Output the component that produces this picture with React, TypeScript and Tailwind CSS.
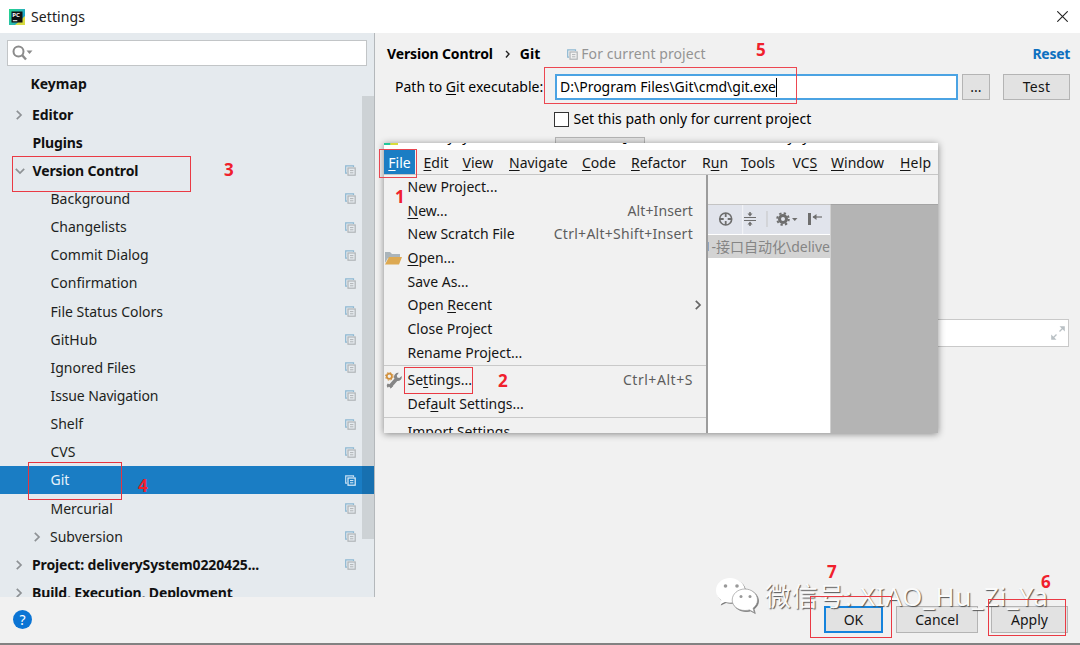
import React from "react";

type Row = { t: string; x: number; bold?: boolean; arrow?: "r" | "d"; copy?: boolean; sel?: boolean; k?: string };

const rows: Row[] = [
  { t: "Editor", x: 32, bold: true, arrow: "r" },
  { t: "Plugins", x: 32.5, bold: true },
  { t: "Version Control", x: 32.5, bold: true, arrow: "d", copy: true },
  { t: "Background", x: 50.5, copy: true },
  { t: "Changelists", x: 50.5, copy: true },
  { t: "Commit Dialog", x: 50.5, copy: true },
  { t: "Confirmation", x: 50.5, copy: true },
  { t: "File Status Colors", x: 50.5, copy: true },
  { t: "GitHub", x: 50.5, copy: true },
  { t: "Ignored Files", x: 50.5, copy: true },
  { t: "Issue Navigation", x: 50.5, copy: true, k: "tracking-[-0.12px]" },
  { t: "Shelf", x: 50.5, copy: true },
  { t: "CVS", x: 50.5, copy: true },
  { t: "Git", x: 50.5, copy: true, sel: true },
  { t: "Mercurial", x: 50.5, copy: true },
  { t: "Subversion", x: 50, arrow: "r", copy: true },
  { t: "Project: deliverySystem0220425...", x: 32, bold: true, arrow: "r", copy: true },
  { t: "Build, Execution, Deployment", x: 32, bold: true, arrow: "r" },
];

function CopyIcon({ sel }: { sel?: boolean }) {
  return (
    <svg width="11" height="11" viewBox="0 0 11 11" fill="none" className="shrink-0">
      <path d="M8.500 2V.8H.7v7.400H2" stroke={sel ? "#c5def2" : "#8db8d2"} strokeWidth="1.200" />
      <rect x="3" y="3" width="7.200" height="7.200" stroke={sel ? "#e2eff9" : "#b0b4b7"} strokeWidth="1.200" />
      <path d="M5 5.600h3.400M5 7.800h3.400" stroke={sel ? "#e2eff9" : "#b0b4b7"} />
    </svg>
  );
}

function Arrow({ dir, color = "#8e9295" }: { dir: "r" | "d"; color?: string }) {
  return (
    <svg width="10" height="10" viewBox="0 0 10 10" fill="none" className="shrink-0">
      <path d={dir === "r" ? "M2.8.8 7 5 2.8 9.2" : "M.8 2.8 5 7 9.2 2.8"} stroke={color} strokeWidth="1.700" />
    </svg>
  );
}

function TreeRow({ r }: { r: Row }) {
  return (
    <div className={"flex h-[28.15px] shrink-0 items-center " + (r.sel ? "bg-[#1a7dc4] text-[#e8f3fb]" : "text-[#1d1f21]")}>
      <div className="flex shrink-0 justify-end pr-[8px]" style={{ width: r.x }}>
        {r.arrow && <Arrow dir={r.arrow} />}
      </div>
      <div className={"flex-1 whitespace-nowrap " + (r.bold ? "font-bold tracking-[-0.14px] text-[#111] " : "") + (r.k ?? "")}>{r.t}</div>
      {r.copy && <CopyIcon sel={r.sel} />}
      <div className="w-[18px] shrink-0" />
    </div>
  );
}

function U({ s }: { s: string }) {
  const [a, b, c] = s.split("_");
  if (b === undefined) return <>{a}</>;
  return (
    <>
      {a}
      <span className="underline decoration-1 underline-offset-2">{b}</span>
      {c}
    </>
  );
}

function MenuItem({ s, k, icon, arrow }: { s: string; k?: string; icon?: React.ReactNode; arrow?: boolean }) {
  return (
    <div className="flex h-[23.65px] shrink-0 items-center whitespace-nowrap">
      <div className="w-[23.5px] shrink-0 pl-px">{icon}</div>
      <div className="flex-1 text-[#151515]"><U s={s} /></div>
      {k && <div className={"pr-[13px] text-[#5d5d5d] " + (k === "Ctrl+Alt+S" ? "tracking-[0.55px]" : k.startsWith("Ctrl") ? "tracking-[0.27px]" : "tracking-[0.1px]")}>{k}</div>}
      {arrow && <div className="pr-[3px]"><Arrow dir="r" color="#666" /></div>}
    </div>
  );
}

function Btn({ c, children }: { c: string; children: React.ReactNode }) {
  return <div className={"flex shrink-0 items-center justify-center text-[#151515] " + c}>{children}</div>;
}

function Mark({ c, n }: { c: string; n: string }) {
  return <div className={"absolute text-[17px] leading-5 font-bold text-[#f0202c] " + c}>{n}</div>;
}

function Logo() {
  return (
    <svg width="16" height="16" viewBox="0 0 16 16">
      <defs>
        <linearGradient id="lg" x1="0" y1="0" x2="1" y2="0.6">
          <stop offset="0" stopColor="#21d789" />
          <stop offset=".6" stopColor="#2bb8b0" />
          <stop offset="1" stopColor="#1597d8" />
        </linearGradient>
      </defs>
      <rect width="16" height="16" fill="url(#lg)" />
      <path d="M16 7v9H6z" fill="#d8dc42" />
      <rect x="2.500" y="2.500" width="11" height="11" fill="#111" />
      <text x="3.200" y="8" fontSize="6" fontWeight="700" fill="#fff" fontFamily="Noto Sans">PC</text>
      <path d="M3.800 11.700h4.500" stroke="#fff" />
    </svg>
  );
}

const menus = [
  { s: "_F_ile", c: "w-[31px] justify-center bg-[#1a7dc4] text-white" },
  { s: "_E_dit", c: "pl-[8.500px] w-[47.500px]" },
  { s: "_V_iew", c: "w-[46.500px]" },
  { s: "_N_avigate", c: "w-[73px]" },
  { s: "_C_ode", c: "w-[49px]" },
  { s: "_R_efactor", c: "w-[71px]" },
  { s: "R_u_n", c: "w-[39px]" },
  { s: "_T_ools", c: "w-[51.500px]" },
  { s: "VC_S_", c: "w-[38.500px]" },
  { s: "_W_indow", c: "w-[69px]" },
  { s: "_H_elp", c: "tracking-[0.2px]" },
];

function Popup() {
  return (
    <div className="absolute top-[143px] left-[384px] flex h-[290px] w-[554px] flex-col overflow-hidden bg-[#f1f1f1] shadow-[0_1px_7px_rgba(0,0,0,0.45)]">
      <div className="relative h-[7px] shrink-0 overflow-hidden bg-white">
        <div className="h-[2px] w-[14px] bg-linear-to-r from-[#21c79a] from-40% to-[#d9dc3c] to-50%" />
        <div className="absolute top-[-17px] left-[19px] leading-[20px] whitespace-pre">deliverySystem</div>
        <div className="absolute top-[-17px] left-[238px] leading-[20px] whitespace-pre">[D:\</div>
        <div className="absolute top-[-17px] left-[359px] leading-[20px] whitespace-pre">deliverySystem</div>
      </div>
      <div className="flex h-[25px] shrink-0 items-stretch border-b border-[#c6c6c6] text-[#151515]">
        {menus.map((m) => (
          <div key={m.s} className={"flex shrink-0 items-center pt-px whitespace-pre " + m.c}><span><U s={m.s} /></span></div>
        ))}
      </div>
      <div className="flex min-h-0 flex-1">
        <div className="flex w-[324px] shrink-0 flex-col overflow-hidden border-r-2 border-[#9c9c9c] bg-[#f1f1f1] pt-[0.4px]">
          <MenuItem s="New Project..." />
          <MenuItem s="_N_ew..." k="Alt+Insert" />
          <MenuItem s="New Scratch File" k="Ctrl+Alt+Shift+Insert" />
          <MenuItem
            s="_O_pen..."
            icon={
              <svg width="17" height="13" viewBox="0 0 17 13">
                <path d="M0 0h5l2 2h8v4H3L0 11z" fill="#aab4ba" />
                <path d="M4 5h13l-3 7.500H0z" fill="#dda952" />
              </svg>
            }
          />
          <MenuItem s="Save As..." />
          <MenuItem s="Open _R_ecent" arrow />
          <MenuItem s="Close Project" />
          <MenuItem s="Rename Project..." />
          <div className="mt-[0.6px] mb-[2.5px] h-px shrink-0 bg-[#c9c9c9]" />
          <MenuItem
            s="Se_t_tings..."
            k="Ctrl+Alt+S"
            icon={
              <svg width="17" height="17" viewBox="0 0 17 17" fill="none">
                <path d="M4.500 15 12 6.500" stroke="#858585" strokeWidth="3.600" />
                <path d="M13.800.8a4.200 4.200 0 0 0-4.600 5.400l3 2.800a4.200 4.200 0 0 0 4.500-5l-2.400 2-2-.6-.5-2z" fill="#858585" />
                <path d="M2.800 11.500a3 3 0 0 0 0 4.200l1.500-1.500 1.200.8-.2 1.700 3-2.700z" fill="#858585" />
                <circle cx="4.300" cy="4.300" r="2.600" stroke="#d0903d" strokeWidth="1.800" />
                <circle cx="4.300" cy="4.300" r="3.900" stroke="#d0903d" strokeWidth=".9" strokeDasharray="1.600 1.460" />
              </svg>
            }
          />
          <MenuItem s="Def_a_ult Settings..." />
          <div className="mt-[1px] mb-[2.5px] h-px shrink-0 bg-[#c9c9c9]" />
          <MenuItem s="Import Settings..." />
        </div>
        <div className="flex flex-1 flex-col">
          <div className="h-[29px] shrink-0" />
          <div className="flex flex-1">
            <div className="flex w-[122px] shrink-0 flex-col bg-white">
              <div className="h-[31px] shrink-0 border-t border-b border-t-[#c4c4c4] border-b-white bg-[#e1e4ec]">
                <svg width="122" height="29" viewBox="0 0 122 29" fill="none" stroke="#6e6e6e">
                  <circle cx="17.700" cy="14" r="6" strokeWidth="1.600" />
                  <path d="M17.700 8v4M17.700 16v4M11.700 14h4M19.700 14h4" strokeWidth="1.800" />
                  <path d="M34.700 0v29" stroke="#f4f5f8" />
                  <path d="M36 12.500h12M36 15.500h12" strokeWidth="1.200" />
                  <path d="M42 7v3M42 18v3" strokeWidth="1.500" />
                  <path d="m39.500 8.500 2.500 3 2.500-3zM39.500 19.500l2.500-3 2.500 3z" fill="#6e6e6e" stroke="none" />
                  <path d="M59 6v16" stroke="#c5c5c5" />
                  <circle cx="75" cy="14" r="3.500" strokeWidth="3" />
                  <circle cx="75" cy="14" r="5.800" strokeWidth="2" strokeDasharray="2.300 2.255" />
                  <path d="M84 13h5.500l-2.750 3z" fill="#6e6e6e" stroke="none" />
                  <path d="M101.500 8v12" strokeWidth="3" />
                  <path d="M105 12h9" strokeWidth="1.200" />
                  <path d="m108.500 9-4 3 4 3z" fill="#6e6e6e" stroke="none" />
                </svg>
              </div>
              <div className="flex h-[23px] shrink-0 items-center overflow-hidden bg-[#d3d3d3] whitespace-nowrap text-[#858585]">
                <span className="mr-[3px] h-[9px] w-px bg-[#8fa5c2]" />
                <span className="text-[14px]">-接口自动化\delive</span>
              </div>
            </div>
            <div className="flex-1 border-t border-l border-t-[#a4a4a4] border-l-[#d0d0d0] bg-[#b4b4b4]" />
          </div>
        </div>
      </div>
    </div>
  );
}

function Watermark() {
  return (
    <div className="absolute top-[575px] left-[714px] flex items-center">
      <svg width="46" height="42" viewBox="0 0 46 42" className="drop-shadow-[1px_1px_0.5px_rgba(80,80,80,0.75)]">
        <path d="M16 3C8 3 2 8.500 2 15.500c0 4 2 7.400 5.300 9.700L5.800 29.500l5.200-2.500c1.600.5 3.300.8 5 .8 8 0 15-5.500 15-12.300S24 3 16 3z" fill="#fff" />
        <path d="M30.800 14c7 0 12.700 4.800 12.700 11 0 3.400-1.800 6.200-4.500 8.200l1.300 4.300-4.800-2.600c-1.400.4-2.900.6-4.500.6-7 0-12.800-4.500-12.800-10.500S23.800 14 30.800 14z" fill="#fff" stroke="#999" strokeWidth=".7" />
        <g fill="#999">
          <circle cx="11.500" cy="11" r="1.800" /><circle cx="23" cy="11" r="1.800" />
          <circle cx="27" cy="21.500" r="1.500" /><circle cx="36" cy="21.500" r="1.500" />
        </g>
      </svg>
      <div className="ml-[5px] text-[26px] leading-[40px] tracking-[0.65px] whitespace-nowrap text-[#fafafa] [text-shadow:1px_1px_1px_#555]">微信号: XIAO_Hu_Zi_Ya</div>
    </div>
  );
}

export default function App() {
  return (
    <div className="relative flex h-[645px] w-[1080px] flex-col overflow-hidden bg-[#f1f1f1] font-['Noto_Sans','Noto_Sans_CJK_SC',sans-serif] text-[14px] leading-[20px]">
      <div className="flex h-[33px] shrink-0 items-center bg-white pr-[12px] pl-[9px]">
        <Logo />
        <div className="ml-[6px] flex-1 tracking-[0.1px] text-[#222]">Settings</div>
        <svg width="11" height="11" viewBox="0 0 11 11"><path d="m.3.3 10.400 10.400m0-10.400L.3 10.700" stroke="#222" strokeWidth="1.100" /></svg>
      </div>
      <div className="flex h-[563.5px] shrink-0">
        <div className="relative flex w-[375px] shrink-0 flex-col overflow-hidden border-r border-[#b4b8bb] bg-[#e5eaee]">
          <div className="mx-[7px] mt-[7px] flex h-[26px] shrink-0 items-center border border-[#c2c5c7] bg-white pl-[4px]">
            <svg width="22" height="16" viewBox="0 0 22 16" fill="none">
              <circle cx="6.500" cy="6.500" r="5" stroke="#8b8b8b" strokeWidth="2" />
              <path d="m10 10 4 4.500" stroke="#8b8b8b" strokeWidth="2.400" />
              <path d="M14.500 5.500h6l-3 3.500z" fill="#8b8b8b" />
            </svg>
          </div>
          <div className="mt-[4px] mb-[-2.5px] flex h-[33px] shrink-0 items-start pt-[4px] pl-[30.5px] font-bold text-[#111]">Keymap</div>
          {rows.map((r) => <TreeRow key={r.t} r={r} />)}
          <div className="absolute top-[63px] right-0 h-[443px] w-[12px] bg-black/10" />
        </div>
        <div className="flex flex-1 flex-col">
          <div className="mt-[11px] flex h-[20px] items-center pr-[10px] pl-[12px] whitespace-nowrap">
            <b className="tracking-[-0.14px]">Version Control</b>
            <svg width="6" height="9" viewBox="0 0 6 9" fill="none" className="mr-[9px] ml-[12px]"><path d="m1 1 3 3-3 3.500" stroke="#222" strokeWidth="1.400" /></svg>
            <b>Git</b>
            <div className="ml-[27px]"><CopyIcon /></div>
            <div className="ml-[3px] flex-1 tracking-[0.08px] text-[#949494]">For current project</div>
            <b className="tracking-[-0.3px] text-[#0d70c0]">Reset</b>
          </div>
          <div className="mt-[9px] flex h-[28px] items-center pl-[20px] whitespace-nowrap">
            <div className="w-[160px] shrink-0"><U s="Path to _G_it executable:" /></div>
            <div className="flex h-[26px] w-[403px] shrink-0 items-center border-2 border-[#4ba3e3] bg-white pl-[3px]">
              D:\Program Files\Git\cmd\git.exe<span className="h-[19px] w-px bg-black" />
            </div>
            <Btn c="ml-[4px] h-[26px] w-[28px] border border-[#b4b4b4] bg-[#e2e2e2]">...</Btn>
            <Btn c="ml-[13px] h-[26px] w-[67px] border border-[#b4b4b4] bg-[#e2e2e2] tracking-[0.3px]">Test</Btn>
          </div>
          <div className="mt-[8px] flex h-[20px] items-center pl-[179px]">
            <div className="h-[15px] w-[15px] border border-[#333] bg-white" />
            <div className="ml-[4.5px]">Set this path only for current project</div>
          </div>
          <div className="mt-[8px] ml-[180px] h-[26px] w-[90px] border border-[#b4b4b4] bg-[#e2e2e2]" />
          <div className="mt-[156px] ml-[180px] flex h-[28px] w-[514px] items-center justify-end border border-[#c9c9c9] bg-white pr-[3px]">
            <svg width="14" height="14" viewBox="0 0 14 14" fill="none" stroke="#b9c0c4" strokeWidth="1.300">
              <path d="m12.500 1.500-4 4M1.500 12.500l4-4" />
              <path d="M8.500.2h5.300v5.300zM.2 8.500v5.300h5.300z" fill="#b9c0c4" stroke="none" />
            </svg>
          </div>
        </div>
      </div>
      <div className="flex flex-1 items-start border-b-2 border-[#828282] pt-[9.500px] pl-[13px]">
        <div className="mt-[4px] flex h-[19px] w-[19px] items-center justify-center rounded-full bg-[#0b74d4] text-white">?</div>
        <div className="flex-1" />
        <Btn c="h-[27px] w-[59px] border-2 border-[#1583dc] bg-[#e2e2e2]">OK</Btn>
        <Btn c="ml-[13px] h-[27px] w-[82px] border border-[#b4b4b4] bg-[#e2e2e2]">Cancel</Btn>
        <Btn c="mr-[12px] ml-[13px] h-[27px] w-[77px] border border-[#b4b4b4] bg-[#e2e2e2]">Apply</Btn>
      </div>
      <Popup />
      <Watermark />
      <div className="absolute top-[156px] left-[12px] h-[36px] w-[179px] border border-[#ea3a44]" />
      <div className="absolute top-[462px] left-[28px] h-[38px] w-[94px] border border-[#e5343f]" />
      <div className="absolute top-[67px] left-[544px] h-[37px] w-[253px] border border-[#ec4751]" />
      <div className="absolute top-[149px] left-[379px] h-[29px] w-[38px] border border-[#e84651]" />
      <div className="absolute top-[367px] left-[404px] h-[27px] w-[69px] border border-[#ea3a44]" />
      <div className="absolute top-[596px] left-[810px] h-[42px] w-[82px] border border-[#ea3a44]" />
      <div className="absolute top-[599px] left-[988px] h-[37px] w-[78px] border border-[#ea3a44]" />
      <Mark c="left-[395px] top-[187px]" n="1" />
      <Mark c="left-[498px] top-[371px]" n="2" />
      <Mark c="left-[224px] top-[160px]" n="3" />
      <Mark c="left-[138px] top-[476px]" n="4" />
      <Mark c="left-[756px] top-[40px]" n="5" />
      <Mark c="left-[1041px] top-[572px]" n="6" />
      <Mark c="left-[827px] top-[562px]" n="7" />
    </div>
  );
}
